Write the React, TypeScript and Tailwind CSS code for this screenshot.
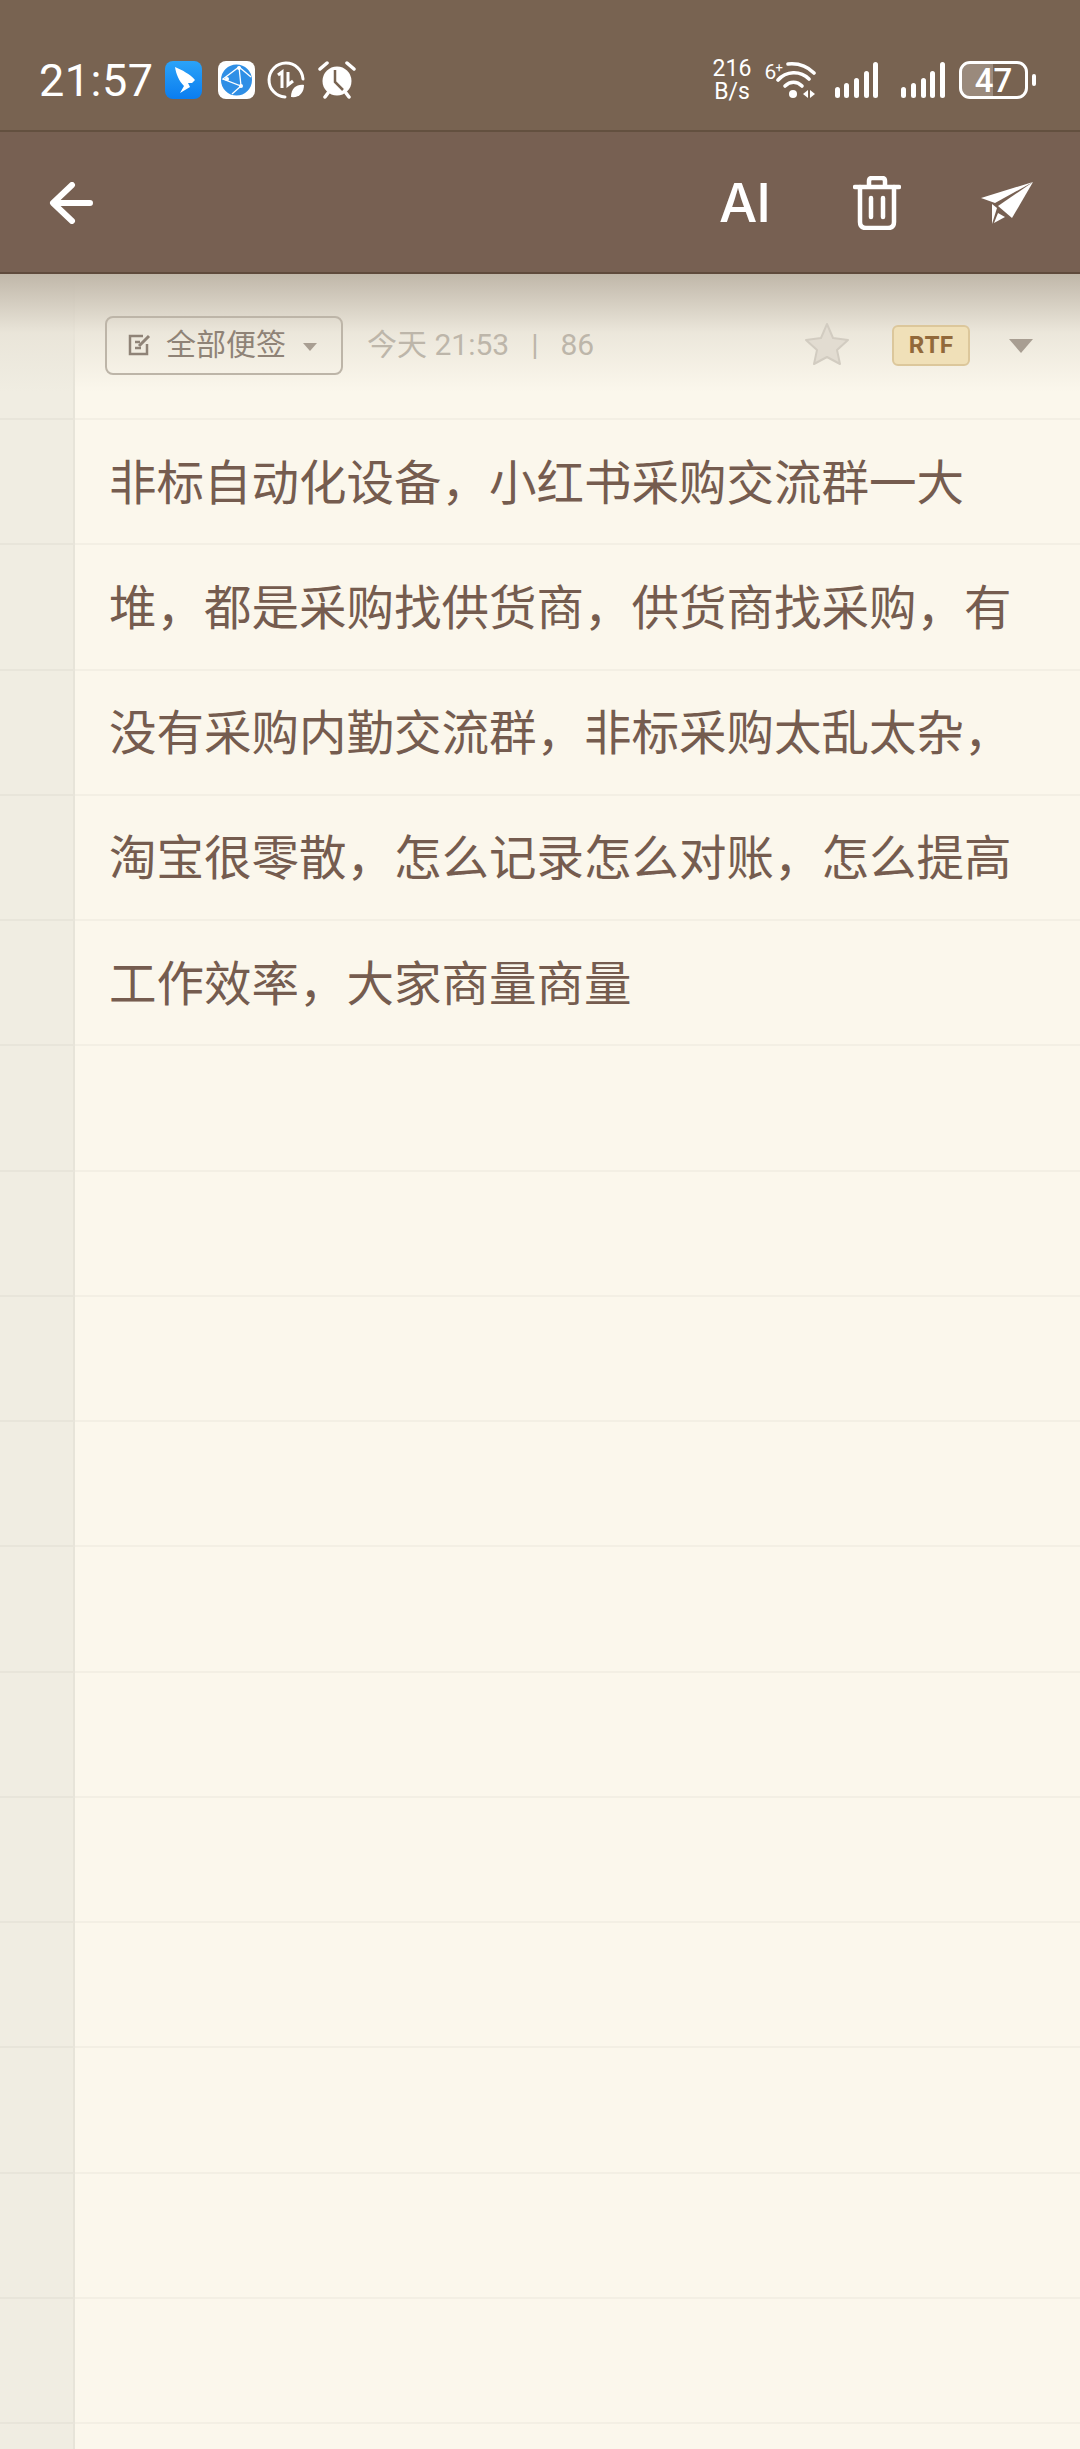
const cjk = "font-['Roboto','Noto_Sans_CJK_SC',sans-serif]";

const lines = [
  "非标自动化设备，小红书采购交流群一大",
  "堆，都是采购找供货商，供货商找采购，有",
  "没有采购内勤交流群，非标采购太乱太杂，",
  "淘宝很零散，怎么记录怎么对账，怎么提高",
  "工作效率，大家商量商量",
];

function Bars() {
  return (
    <div className="flex items-end gap-[4.7px] h-[36px]">
      <div className="w-[5px] h-[11px] rounded-full bg-white" />
      <div className="w-[5px] h-[15px] rounded-full bg-white" />
      <div className="w-[5px] h-[20px] rounded-full bg-white" />
      <div className="w-[5px] h-[27px] rounded-full bg-white" />
      <div className="w-[5px] h-[36px] rounded-full bg-white" />
    </div>
  );
}

function Wifi() {
  return (
    <svg width="40" height="37" viewBox="0 0 40 37" fill="none" stroke="#fff" strokeLinecap="round">
      <path d="M12 2 C22 1 31 4 38 11" strokeWidth="3.6" />
      <path d="M2 18 C10 9 24 8 33 17" strokeWidth="3.6" />
      <path d="M9 24 C14 19 21 19 26 24" strokeWidth="3.6" />
      <circle cx="17" cy="32" r="4" fill="#fff" stroke="none" />
      <path d="M32 28 v8 l-5 -4 z M34 28 l5 4 l-5 4 z" fill="#fff" stroke="none" />
    </svg>
  );
}

function Side({ last }: { last?: boolean }) {
  return (
    <div className={`w-[75px] shrink-0 bg-[#f0ede2] border-r-2 border-r-[#e7e4d9] ${last ? "" : "border-b-2 border-b-[#e8e5da]"}`} />
  );
}

function Row({ children }: { children?: React.ReactNode }) {
  return (
    <div className="flex h-[125.25px] shrink-0">
      <Side />
      <div className={`flex-1 flex items-center pt-[5px] pl-[34px] border-b-2 border-[#f3efe4] text-[47.5px] text-[#755c4f] whitespace-nowrap ${cjk}`}>
        {children}
      </div>
    </div>
  );
}

export default function App() {
  return (
    <div className="relative w-[1080px] h-[2449px] overflow-hidden bg-[#fbf7ec] flex flex-col">
      {/* status bar */}
      <div className="h-[132px] shrink-0 bg-[#786351] border-b-2 border-[#63503f] flex items-start justify-between pt-[61px] text-white">
        <div className="flex items-center h-[38px] pl-[39px]">
          <span className="text-[45px] leading-none font-['Roboto',sans-serif] tracking-[0.5px] w-[126px]">21:57</span>
          <svg width="37" height="38" viewBox="0 0 37 38">
            <defs>
              <linearGradient id="ding" x1="0" y1="0" x2="0" y2="1">
                <stop offset="0" stopColor="#2ba3f8" />
                <stop offset="1" stopColor="#0a7df0" />
              </linearGradient>
            </defs>
            <rect width="37" height="38" rx="8" fill="url(#ding)" />
            <path d="M10 6 C17 9 25 13 30 19 L27 22 L23 22 L25 26 L15 32 L19 25 C14 20 11 13 10 6Z" fill="#fff" />
          </svg>
          <svg width="37" height="38" viewBox="0 0 37 38" className="ml-[16px]">
            <rect width="37" height="38" rx="8" fill="#fff" />
            <circle cx="18.5" cy="19" r="15.5" fill="#2f8fe6" />
            <path d="M5 18 L21 6 L23 25 Z M21 6 L33 16 M23 25 L14 33" fill="none" stroke="#fff" strokeWidth="1.3" />
            <circle cx="9" cy="18" r="2" fill="#fff" />
            <circle cx="21" cy="7" r="2" fill="#fff" />
            <circle cx="23" cy="25" r="2" fill="#fff" />
          </svg>
          <svg width="38" height="38" viewBox="0 0 38 38" fill="none" stroke="#fff" className="ml-[12px]">
            <path d="M18 36 A17 17 0 1 1 36 18" strokeWidth="3" strokeLinecap="round" />
            <path d="M11 14 L15 11 V27 M21 11 V24 L26 20" strokeWidth="3" />
            <path d="M24 36 C24 27 30 23 37 24 C37 32 32 37 24 36Z" fill="#fff" stroke="none" />
          </svg>
          <svg width="38" height="38" viewBox="0 0 38 38" className="ml-[13px]">
            <circle cx="19" cy="20" r="14.5" fill="#fff" />
            <path d="M17 9 V21 L25 29" fill="none" stroke="#786351" strokeWidth="2.5" />
            <path d="M2 8 L9 2 M36 8 L29 2 M7 36 L10 32 M31 36 L28 32" stroke="#fff" strokeWidth="3.5" strokeLinecap="round" />
          </svg>
        </div>
        <div className="flex items-center h-[38px] pr-[44px]">
          <div className="flex flex-col items-center text-[23px] leading-[23px] font-['Roboto',sans-serif] w-[39px]">
            <span>216</span>
            <span>B/s</span>
          </div>
          <div className="relative ml-[13px] w-[51px] h-[37px]">
            <span className="absolute left-0 top-0 text-[21px] leading-none font-['Roboto',sans-serif]">6</span>
            <span className="absolute left-[11px] -top-[1px] text-[13px] leading-none font-['Roboto',sans-serif]">+</span>
            <div className="absolute left-[11px] top-0"><Wifi /></div>
          </div>
          <div className="ml-[19px]"><Bars /></div>
          <div className="ml-[23px]"><Bars /></div>
          <div className="relative ml-[14px] w-[69px] h-[38px] rounded-[11px] border-[3px] border-white overflow-hidden flex items-center justify-center">
            <div className="absolute left-0 top-0 bottom-0 w-[31px] bg-white/25" />
            <span className="relative text-[33px] leading-none font-medium font-['Roboto',sans-serif]">47</span>
          </div>
          <div className="ml-[4px] w-[4px] h-[12px] rounded-full bg-white" />
        </div>
      </div>

      {/* toolbar */}
      <div className="h-[142px] shrink-0 bg-[#776052] border-b-2 border-[#5f4a3c] flex items-center pt-[2px] text-white">
        <svg width="44" height="42" viewBox="0 0 44 42" fill="none" stroke="#fff" strokeWidth="6" strokeLinecap="round" strokeLinejoin="round" className="ml-[49px]">
          <path d="M41 21 H5 M23 3 L4 21 L23 39" />
        </svg>
        <span className="ml-auto text-[54px] leading-none font-['Inter',sans-serif] font-medium tracking-[-1px]">AI</span>
        <svg width="48" height="54" viewBox="0 0 48 54" fill="none" stroke="#fff" strokeWidth="4.5" strokeLinecap="round" strokeLinejoin="round" className="ml-[83px]">
          <path d="M2 11 H46 M16 11 V5 Q16 2 19 2 H29 Q32 2 32 5 V11" />
          <path d="M7 11 V46 Q7 52 13 52 H35 Q41 52 41 46 V11" />
          <path d="M18 22 V41 M30 22 V41" />
        </svg>
        <svg width="52" height="42" viewBox="0 0 52 42" className="ml-[80px] mr-[47px]">
          <path d="M0 16 L52 0 L14 21 Z" fill="#fff" />
          <path d="M52 0 L17 24 L31 36 Z" fill="#fff" />
          <path d="M11 22 L16 26 L11 42 Z" fill="#fff" />
          <path d="M17 31 L24 35 L13 41 Z" fill="#fff" />
        </svg>
      </div>

      {/* meta row */}
      <div className="flex h-[146px] shrink-0">
        <Side />
        <div className={`relative z-10 flex-1 flex items-center pb-[2px] border-b-2 border-[#f3efe4] ${cjk}`}>
          <div className="ml-[30px] w-[238px] h-[59px] rounded-[8px] border-2 border-[#bdb5a8] flex items-center pl-[21px]">
            <svg width="24" height="24" viewBox="0 0 24 24" fill="none" stroke="#8f8377" strokeWidth="2.5">
              <path d="M19 11 V21 H2 V3 H15" />
              <path d="M7 9 H12 M7 15 H13" />
              <path d="M11 13 L21 3" strokeWidth="3" />
            </svg>
            <span className="ml-[14px] text-[30px] leading-none text-[#8f8377] whitespace-nowrap">全部便签</span>
            <div className="ml-[17px] mt-[3px] w-0 h-0 border-x-[7px] border-x-transparent border-t-[8px] border-t-[#a89e92]" />
          </div>
          <span className="ml-[24px] text-[30px] leading-none text-[#bdb6aa] whitespace-nowrap">今天 21:53</span>
          <span className="ml-[22px] text-[30px] leading-none text-[#bdb6aa]">|</span>
          <span className="ml-[22px] text-[30px] leading-none text-[#bdb6aa]">86</span>
          <svg width="46" height="44" viewBox="0 0 46 44" className="ml-[210px] -mt-[2px]">
            <path d="M23 2 L29 16 L44 18 L33 28 L36 42 L23 35 L10 42 L13 28 L2 18 L17 16 Z" fill="#e2dcd1" stroke="#d2ccc1" strokeWidth="2" strokeLinejoin="round" />
          </svg>
          <div className="ml-[42px] w-[78px] h-[41px] rounded-[6px] bg-[#f0e0b8] border-2 border-[#dcc79b] flex items-center justify-center text-[23.5px] leading-none font-bold font-['Inter',sans-serif] text-[#92693a]">
            RTF
          </div>
          <div className="ml-[39px] mt-[2px] w-0 h-0 border-x-[12px] border-x-transparent border-t-[14px] border-t-[#a89e92]" />
        </div>
      </div>

      {/* text lines */}
      {Array.from({ length: 16 }).map((_, i) => (
        <Row key={i}>{lines[i]}</Row>
      ))}
      <div className="flex flex-1">
        <Side last />
      </div>

      {/* shadow under toolbar */}
      <div className="absolute left-0 right-0 top-[274px] h-[118px] bg-gradient-to-b from-[#c0b7a9] via-[#e8e3d7]/80 to-transparent pointer-events-none" />
    </div>
  );
}
